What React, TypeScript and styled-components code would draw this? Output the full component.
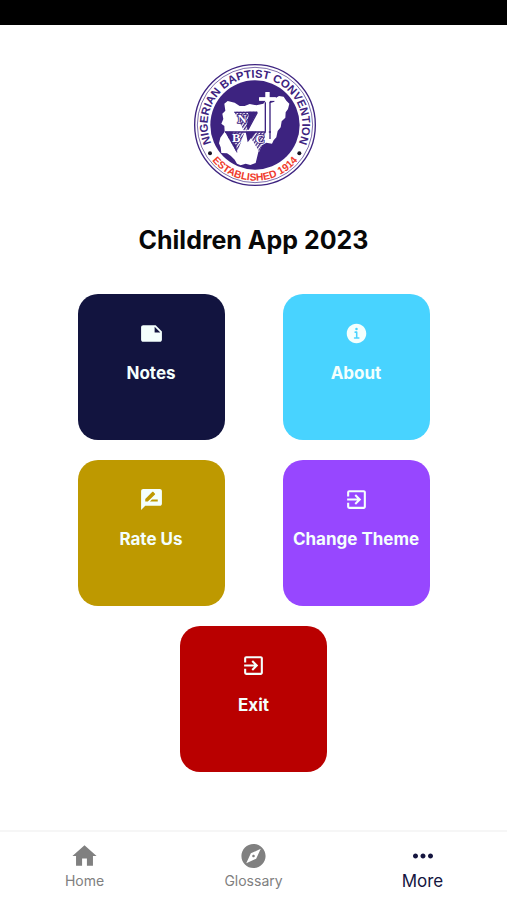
import React from 'react';
import styled, { createGlobalStyle } from 'styled-components';
import { MdNote, MdRateReview, MdExitToApp, MdHome, MdExplore, MdMoreHoriz } from 'react-icons/md';
import { IoInformationCircle } from 'react-icons/io5';

const GlobalStyle = createGlobalStyle`
  * { box-sizing: border-box; }
  body {
    margin: 0;
    background: #fff;
    font-family: Inter, "Liberation Sans", sans-serif;
  }
`;

const Page = styled.div`
  min-height: 100vh;
  display: flex;
  flex-direction: column;
`;

const StatusBar = styled.div`
  height: 25px;
  background: #000;
`;

const Content = styled.main`
  flex: 1;
  display: flex;
  flex-direction: column;
  align-items: center;
  padding: 38px 0 24px;
`;

const Logo = styled.svg`
  display: block;
  width: 126px;
  height: 124px;
`;

const Title = styled.h1`
  margin: 37px 0 38px;
  font-size: 25px;
  line-height: 32px;
  font-weight: 700;
  color: #080808;
`;

const Tiles = styled.div`
  display: flex;
  flex-wrap: wrap;
  justify-content: center;
  gap: 20px 58px;
  max-width: 400px;
`;

const Tile = styled.button<{ $color: string }>`
  display: flex;
  flex-direction: column;
  align-items: center;
  gap: 17px;
  width: 147px;
  height: 146px;
  padding: 27px 0 0;
  border: 0;
  border-radius: 20px;
  background: ${(p) => p.$color};
  color: #f4fffd;
  font-family: inherit;
  font-size: 17px;
  line-height: 20px;
  font-weight: 700;
  white-space: nowrap;
  cursor: pointer;

  svg {
    width: 25px;
    height: 25px;
  }
`;

const TabBar = styled.nav`
  display: flex;
  height: 70px;
  border-top: 2px solid #f6f6f6;
`;

const Tab = styled.a<{ $active?: boolean }>`
  flex: 1;
  display: flex;
  flex-direction: column;
  align-items: center;
  padding-top: 9px;
  color: ${(p) => (p.$active ? '#15153f' : '#808080')};
  font-size: ${(p) => (p.$active ? 17 : 14)}px;
  line-height: 20px;
  text-decoration: none;

  svg {
    width: ${(p) => (p.$active ? 30 : 29)}px;
    height: 30px;
  }
`;

const PURPLE = '#3d2380';

function ConventionLogo() {
  return (
    <Logo viewBox="20 22 378 372" role="img" aria-label="Nigerian Baptist Convention">
      <defs>
        <path id="ring-top" d="M 95.7 289.4 A 142 142 0 1 1 328.3 289.4" />
        <path id="ring-bottom" d="M 65.9 288.7 A 166.6 166.6 0 0 0 358.1 288.7" />
        <pattern id="hatch" width="8" height="8" patternUnits="userSpaceOnUse" patternTransform="rotate(35)">
          <rect width="8" height="8" fill="#fff" />
          <rect width="4" height="8" fill={PURPLE} />
        </pattern>
      </defs>
      <circle cx="212" cy="208" r="181" fill="#fff" stroke={PURPLE} strokeWidth="4" />
      <circle cx="212" cy="208" r="173" fill="none" stroke={PURPLE} strokeWidth="2" />
      <circle cx="212" cy="208" r="134" fill={PURPLE} />
      <path
        fill="#fff"
        d="M120 144 L130 136 L151 141 L166 151 L181 151 L196 145 L216 149 L237 144 L243 137 V135 H224 V125 H243 V109 H256 V125 H275 V135 H257 L256 143 L270 138 L273 128 L284 121 L298 123 L306 135 L315 144 L311 160 L304 170 L303 186 L292 197 L289 215 L280 226 L276 245 L268 254 L263 264 L246 261 L233 269 L222 289 L214 322 L198 328 L184 324 L169 329 L158 324 L151 312 L139 300 L128 293 L111 292 L109 275 L104 263 L108 246 L121 228 L120 211 L111 204 L117 190 L114 174 L123 165 Z"
      />
      <path d="M150 168 H218 L188 224 H178 Z" fill="url(#hatch)" />
      <path d="M190 168 H219 L190 222 L187 210 L194 174 Z" fill={PURPLE} />
      <path d="M219 170 L242 226 H191 Z" fill="#fff" />
      <path d="M150 170 H219 M219 170 L191 222" stroke={PURPLE} strokeWidth="4" />
      <path d="M122 228 H181 L158 292 Z" fill="url(#hatch)" />
      <path d="M122 228 H144 L148 263 L156 267 L158 292 Z" fill={PURPLE} />
      <path d="M188 228 H246 L225 288 Z" fill="url(#hatch)" />
      <path d="M184 228 H216 L190 260 Z" fill={PURPLE} />
      <path d="M122 229 H260" stroke={PURPLE} strokeWidth="5" />
      <path d="M249 112 V258 M226 130 H273" stroke="#fff" strokeWidth="9" />
      <path d="M257 138 V250 M243 140 V228" stroke={PURPLE} strokeWidth="4" />
      <g fill="#fff" stroke={PURPLE} strokeWidth="5" paintOrder="stroke" fontFamily="Liberation Serif, serif" fontWeight="700" fontSize="38" textAnchor="middle">
        <text x="173" y="202">N</text>
        <text x="156" y="260">B</text>
        <text x="227" y="261">C</text>
      </g>
      <g fontFamily="Liberation Sans, sans-serif" fontWeight="700" textAnchor="middle">
        <text fontSize="34" fill={PURPLE}>
          <textPath href="#ring-top" startOffset="50%">NIGERIAN BAPTIST CONVENTION</textPath>
        </text>
        <text fontSize="31" fill="#ef3a2b">
          <textPath href="#ring-bottom" startOffset="50%">ESTABLISHED 1914</textPath>
        </text>
      </g>
      <circle cx="77" cy="293" r="6" fill="#171322" />
      <circle cx="345" cy="293" r="6" fill="#171322" />
    </Logo>
  );
}

const tiles = [
  { label: 'Notes', color: '#12143f', Icon: MdNote },
  { label: 'About', color: '#48d3ff', Icon: IoInformationCircle },
  { label: 'Rate Us', color: '#be9900', Icon: MdRateReview },
  { label: 'Change Theme', color: '#9747ff', Icon: MdExitToApp },
  { label: 'Exit', color: '#b90000', Icon: MdExitToApp },
];

const tabs = [
  { label: 'Home', Icon: MdHome, active: false },
  { label: 'Glossary', Icon: MdExplore, active: false },
  { label: 'More', Icon: MdMoreHoriz, active: true },
];

export default function App() {
  return (
    <Page>
      <GlobalStyle />
      <StatusBar />
      <Content>
        <ConventionLogo />
        <Title>Children App 2023</Title>
        <Tiles>
          {tiles.map(({ label, color, Icon }) => (
            <Tile key={label} type="button" $color={color}>
              <Icon aria-hidden />
              {label}
            </Tile>
          ))}
        </Tiles>
      </Content>
      <TabBar>
        {tabs.map(({ label, Icon, active }) => (
          <Tab key={label} href={`#${label.toLowerCase()}`} $active={active} aria-current={active ? 'page' : undefined}>
            <Icon aria-hidden />
            {label}
          </Tab>
        ))}
      </TabBar>
    </Page>
  );
}
